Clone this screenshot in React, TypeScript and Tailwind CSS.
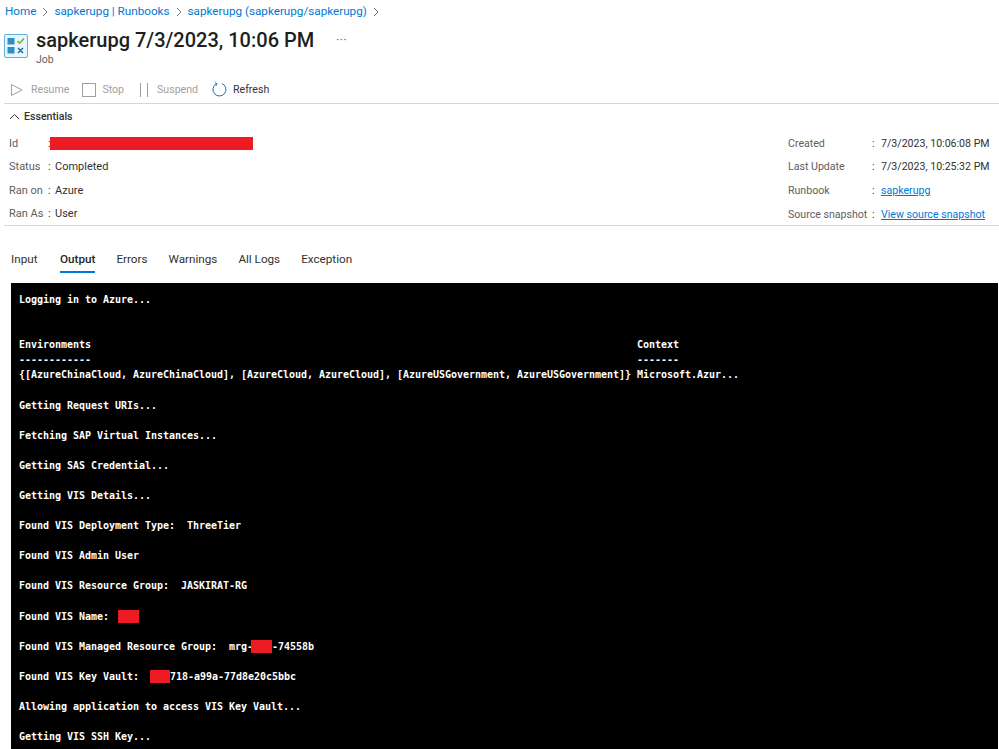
import React from "react";

const Red = ({ w }: { w: string }) => <span className={`inline-block ${w} h-[13px] bg-[#ed1c24] align-middle`} />;

const Sep = () => (
  <svg width="6" height="10" viewBox="0 0 6 10" className="mx-[6px]" fill="none" stroke="#777" strokeWidth="1"><path d="M1 1l4 4-4 4" /></svg>
);

const Row = ({ k, v, wide }: { k: string; v: React.ReactNode; wide?: boolean }) => (
  <div className={`flex h-[23.6px] items-center whitespace-nowrap ${wide ? "text-[10.6px]" : "text-[11px]"}`}>
    <span className={`${wide ? "w-[84px]" : "w-[39px]"} text-[#605e5c]`}>{k}</span>
    <span className={`${wide ? "w-[9px]" : "w-[7px]"} text-[#323130]`}>:</span>
    <span className="text-[#323130]">{v}</span>
  </div>
);

const Tab = ({ t, active, className = "" }: { t: string; active?: boolean; className?: string }) => (
  <div className={`relative h-[25px] ${className} ${active ? "font-medium text-[#252423]" : "text-[#323130]"}`}>
    {t}
    {active && <span className="absolute left-0 right-0 bottom-[3px] h-[2px] bg-[#0078d4]" />}
  </div>
);

const ENV = "Environments" + " ".repeat(91) + "Context";
const DASH = "------------" + " ".repeat(91) + "-------";

export default function App() {
  return (
    <div className="w-[999px] h-[749px] overflow-hidden bg-white font-['Roboto','Noto_Sans',sans-serif] text-[10.6px]">
      <div className="flex items-center h-[23px] pl-[5px] text-[#0078d4] text-[11.7px]">
        <span>Home</span><Sep /><span>sapkerupg | Runbooks</span><Sep /><span>sapkerupg (sapkerupg/sapkerupg)</span><Sep />
      </div>
      <div className="flex items-start pl-[4px] h-[50px]">
        <svg width="24" height="24" viewBox="0 0 24 24" className="mt-[11px]">
          <rect x="0.5" y="0.5" width="23" height="23" rx="1.5" fill="#eaf5fb" stroke="#5fb2dc" />
          <rect x="3.5" y="4" width="7" height="6.5" fill="#2f8fc5" />
          <rect x="3.5" y="13" width="7" height="6.5" fill="#2f8fc5" />
          <path d="M13.5 7l2.2 2.2 4.3-4.7" fill="none" stroke="#6fb52c" strokeWidth="1.6" />
          <path d="M14 14l5 5M19 14l-5 5" fill="none" stroke="#1f74ad" strokeWidth="1.6" />
        </svg>
        <div className="ml-[8px] pt-[3px]">
          <div className="flex items-center">
            <span className="text-[20px] leading-[28px] font-medium text-[#201f1e]">sapkerupg 7/3/2023, 10:06 PM</span>
            <span className="ml-[22px] text-[12px] text-[#605e5c] tracking-[0.5px]">···</span>
          </div>
          <div className="text-[10.5px] leading-[11px] text-[#605e5c]">Job</div>
        </div>
      </div>
      <div className="flex items-center h-[30px] pl-[10px] pt-[3px] text-[#a19f9d]">
        <svg width="14" height="14" viewBox="0 0 14 14" fill="none" stroke="#a19f9d"><path d="M1.5 1.5v11l10.5-5.5z" /></svg>
        <span className="ml-[7px]">Resume</span>
        <svg width="14" height="14" viewBox="0 0 14 14" fill="none" stroke="#a19f9d" className="ml-[13px]"><rect x="0.5" y="0.5" width="13" height="13" /></svg>
        <span className="ml-[6px]">Stop</span>
        <svg width="10" height="14" viewBox="0 0 10 14" fill="none" stroke="#a19f9d" className="ml-[15px]"><path d="M1.5 0v14M8.5 0v14" /></svg>
        <span className="ml-[8px]">Suspend</span>
        <svg width="15" height="15" viewBox="0 0 15 15" fill="none" stroke="#0078d4" className="ml-[14px]"><path d="M4.5 1.7A6.5 6.5 0 1 0 10 1.5" /><path d="M3 0.5l2 1.2-1 2" /></svg>
        <span className="ml-[6px] text-[#323130]">Refresh</span>
      </div>
      <div className="ml-[4px] border-t border-[#d6d6d6] h-[123px] border-b">
        <div className="flex items-center h-[25px] pl-[5px] text-[#323130] font-medium">
          <svg width="11" height="7" viewBox="0 0 11 7" fill="none" stroke="#323130" className="mr-[4px]"><path d="M1 6l4.5-4.5L10 6" /></svg>
          Essentials
        </div>
        <div className="flex justify-between pl-[5px] pt-[3px]">
          <div>
            <Row k="Id" v={<span className="-ml-[5px]"><Red w="w-[203px]" /></span>} />
            <Row k="Status" v="Completed" />
            <Row k="Ran on" v="Azure" />
            <Row k="Ran As" v="User" />
          </div>
          <div className="w-[211px]">
            <Row wide k="Created" v="7/3/2023, 10:06:08 PM" />
            <Row wide k="Last Update" v="7/3/2023, 10:25:32 PM" />
            <Row wide k="Runbook" v={<span className="text-[#0078d4] underline">sapkerupg</span>} />
            <Row wide k="Source snapshot" v={<span className="text-[#0078d4] underline">View source snapshot</span>} />
          </div>
        </div>
      </div>
      <div className="flex gap-[21px] pl-[11px] pt-[25px] h-[57px] text-[11.7px]">
        <Tab t="Input" className="w-[28px]" /><Tab t="Output" active /><Tab t="Errors" /><Tab t="Warnings" /><Tab t="All Logs" /><Tab t="Exception" />
      </div>
      <div className="ml-[11px] mr-[1px] h-[466px] bg-black pl-[8px] pt-[9px] text-white font-['DejaVu_Sans_Mono','Liberation_Mono',monospace] text-[10px] tracking-[-0.02px] font-bold leading-[15.08px] whitespace-pre">
        <div>Logging in to Azure...</div>
        <div>{" "}</div>
        <div>{" "}</div>
        <div>{ENV}</div>
        <div>{DASH}</div>
        <div>{"{[AzureChinaCloud, AzureChinaCloud], [AzureCloud, AzureCloud], [AzureUSGovernment, AzureUSGovernment]} Microsoft.Azur..."}</div>
        <div className="mt-[15.08px]">Getting Request URIs...</div>
        <div className="mt-[15.08px]">Fetching SAP Virtual Instances...</div>
        <div className="mt-[15.08px]">Getting SAS Credential...</div>
        <div className="mt-[15.08px]">Getting VIS Details...</div>
        <div className="mt-[15.08px]">Found VIS Deployment Type:  ThreeTier</div>
        <div className="mt-[15.08px]">Found VIS Admin User</div>
        <div className="mt-[15.08px]">Found VIS Resource Group:  JASKIRAT-RG</div>
        <div className="mt-[15.08px]">Found VIS Name: <span className="ml-[3px]"><Red w="w-[21px]" /></span></div>
        <div className="mt-[15.08px]">Found VIS Managed Resource Group:  mrg-<span className="-ml-[2px]"><Red w="w-[21px]" /></span>-74558b</div>
        <div className="mt-[15.08px]">Found VIS Key Vault: <span className="ml-[5px]"><Red w="w-[20px]" /></span>718-a99a-77d8e20c5bbc</div>
        <div className="mt-[15.08px]">Allowing application to access VIS Key Vault...</div>
        <div className="mt-[15.08px]">Getting VIS SSH Key...</div>
      </div>
    </div>
  );
}
